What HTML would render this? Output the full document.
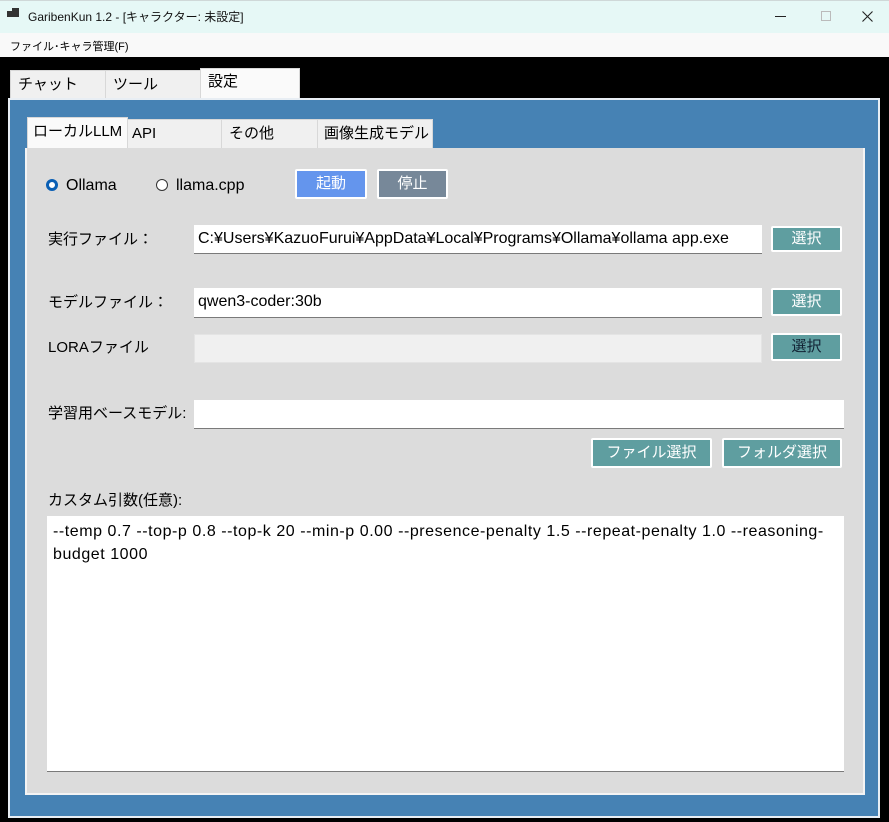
<!DOCTYPE html>
<html><head><meta charset="utf-8"><style>
*{margin:0;padding:0;box-sizing:border-box}
body{width:889px;height:822px;background:#000;position:relative;overflow:hidden;font-family:"Liberation Sans","Noto Sans CJK JP",sans-serif;color:#000}
.a{position:absolute}
.tab{position:absolute;background:#f0f0f0;border:1px solid #d8d8d8;font-size:15px;padding-left:7px;line-height:28px}
.btn{position:absolute;border:2px solid #fff;color:#fff;font-size:15px;text-align:center;border-radius:2px}
.inp{position:absolute;background:#fff;border-bottom:1px solid #7a7a7a;font-size:16px;padding-left:4px;white-space:nowrap}
.lbl{position:absolute;font-size:15px;line-height:20px}
</style></head><body>
<div class="a" style="left:0;top:0;width:889px;height:33px;background:#e6f8f6;border-top:1px solid #cfd8d8"></div>
<div class="a" style="left:7px;top:11px;width:5px;height:6px;background:#333"></div>
<div class="a" style="left:12px;top:8px;width:7px;height:9px;background:#333"></div>
<div class="a" style="left:28px;top:8px;font-size:12px;color:#111">GaribenKun 1.2 - [キャラクター: 未設定]</div>
<div class="a" style="left:775px;top:16px;width:11px;height:1px;background:#222"></div>
<div class="a" style="left:821px;top:11px;width:10px;height:10px;border:1px solid #bbb"></div>
<svg class="a" style="left:862px;top:11px" width="11" height="11"><path d="M0.5 0.5L10.5 10.5M10.5 0.5L0.5 10.5" stroke="#222" stroke-width="1.1"/></svg>
<div class="a" style="left:0;top:33px;width:889px;height:24px;background:#f9f9f9"></div>
<div class="a" style="left:10px;top:38px;font-size:11px">ファイル･キャラ管理(F)</div>

<div class="tab" style="left:10px;top:70px;width:96px;height:29px">チャット</div>
<div class="tab" style="left:105px;top:70px;width:96px;height:29px">ツール</div>
<div class="tab" style="left:200px;top:68px;width:100px;height:31px;background:#fafafa;line-height:26px">設定</div>

<div class="a" style="left:8px;top:98px;width:872px;height:720px;background:#4682b4;border:2px solid #e8eef4"></div>

<div class="tab" style="left:27px;top:117px;width:101px;height:32px;background:#fafafa;padding-left:5px;line-height:28px">ローカルLLM</div>
<div class="tab" style="left:127px;top:119px;width:95px;height:30px;padding-left:4px">API</div>
<div class="tab" style="left:221px;top:119px;width:97px;height:30px">その他</div>
<div class="tab" style="left:317px;top:119px;width:116px;height:30px;padding-left:6px">画像生成モデル</div>

<div class="a" style="left:25px;top:148px;width:840px;height:647px;background:#dcdcdc;border:2px solid #f4f4f4;border-top:none"></div>

<div class="a" style="left:46px;top:179px;width:12px;height:12px;border-radius:50%;border:3.5px solid #0a5fb4;background:#fff"></div>
<div class="lbl" style="left:66px;top:176px;font-size:16px">Ollama</div>
<div class="a" style="left:156px;top:179px;width:12px;height:12px;border-radius:50%;border:1px solid #333;background:#fff"></div>
<div class="lbl" style="left:176px;top:176px;font-size:16px">llama.cpp</div>
<div class="btn" style="left:295px;top:169px;width:72px;height:30px;background:#6495ed;line-height:25px">起動</div>
<div class="btn" style="left:377px;top:169px;width:71px;height:30px;background:#778899;line-height:25px">停止</div>

<div class="lbl" style="left:48px;top:230px">実行ファイル：</div>
<div class="inp" style="left:194px;top:225px;width:568px;height:29px;line-height:28px">C:¥Users¥KazuoFurui¥AppData¥Local¥Programs¥Ollama¥ollama app.exe</div>
<div class="btn" style="left:771px;top:226px;width:71px;height:26px;background:#5f9ea0;line-height:21px">選択</div>

<div class="lbl" style="left:48px;top:293px">モデルファイル：</div>
<div class="inp" style="left:194px;top:288px;width:568px;height:30px;line-height:28px">qwen3-coder:30b</div>
<div class="btn" style="left:771px;top:288px;width:71px;height:28px;background:#5f9ea0;line-height:23px">選択</div>

<div class="lbl" style="left:48px;top:338px">LORAファイル</div>
<div class="a" style="left:194px;top:334px;width:568px;height:29px;background:#f0f0f0;border:1px solid #e4e4e4"></div>
<div class="btn" style="left:771px;top:333px;width:71px;height:28px;background:#5f9ea0;color:#123;line-height:23px">選択</div>

<div class="lbl" style="left:48px;top:404px">学習用ベースモデル:</div>
<div class="inp" style="left:194px;top:400px;width:650px;height:29px"></div>
<div class="btn" style="left:591px;top:438px;width:121px;height:30px;background:#5f9ea0;line-height:25px">ファイル選択</div>
<div class="btn" style="left:722px;top:438px;width:120px;height:30px;background:#5f9ea0;line-height:25px">フォルダ選択</div>

<div class="lbl" style="left:48px;top:491px">カスタム引数(任意):</div>
<div class="inp" style="left:47px;top:516px;width:797px;height:256px;padding:4px 6px;line-height:23px;letter-spacing:0.55px">--temp 0.7 --top-p 0.8 --top-k 20 --min-p 0.00 --presence-penalty 1.5 --repeat-penalty 1.0 --reasoning-<br>budget 1000</div>
</body></html>
